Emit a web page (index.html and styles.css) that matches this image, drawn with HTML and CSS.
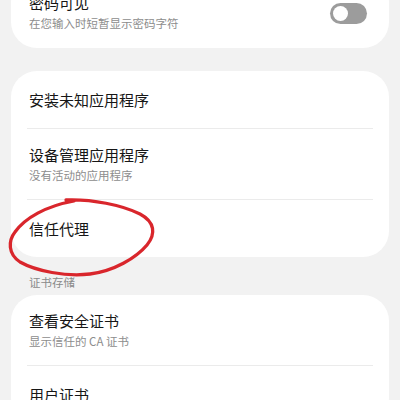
FILE: index.html
```html
<!DOCTYPE html>
<html lang="zh-CN">
<head>
<meta charset="utf-8">
<title>安全设置</title>
<link rel="stylesheet" href="styles.css">
</head>
<body>
<div class="screen">
  <section class="card card-first">
    <div class="row row-two row-switch">
      <div class="texts">
        <div class="title">密码可见</div>
        <div class="sub">在您输入时短暂显示密码字符</div>
      </div>
      <div class="toggle"><span class="knob"></span></div>
    </div>
  </section>

  <section class="card card-gap">
    <div class="row row-one"><div class="title">安装未知应用程序</div></div>
    <div class="sep"></div>
    <div class="row row-two">
      <div class="texts">
        <div class="title">设备管理应用程序</div>
        <div class="sub">没有活动的应用程序</div>
      </div>
    </div>
    <div class="sep"></div>
    <div class="row row-one"><div class="title">信任代理</div></div>
  </section>

  <div class="section-label">证书存储</div>

  <section class="card">
    <div class="row row-two">
      <div class="texts">
        <div class="title">查看安全证书</div>
        <div class="sub">显示信任的 CA 证书</div>
      </div>
    </div>
    <div class="sep"></div>
    <div class="row row-one"><div class="title">用户证书</div></div>
  </section>
</div>

<svg class="scribble" width="400" height="400" viewBox="0 0 400 400" aria-hidden="true">
  <path d="M66,200 C92,199 122,205 140,214 C155,222 156,234 147,245 C136,258 114,271 90,274 C66,277 36,271 20,262 C8,254 8,241 15,232 C25,218 46,206 74,201"/>
</svg>
</body>
</html>
```

FILE: styles.css
```css
html, body {
  margin: 0;
  padding: 0;
  background: #f2f2f2;
}

body {
  width: 400px;
  height: 400px;
  overflow: hidden;
  position: relative;
  font-family: "Noto Sans CJK SC", "Noto Sans", "Liberation Sans", sans-serif;
}

.screen {
  padding: 0 11px;
  display: flex;
  flex-direction: column;
}

.card {
  background: #ffffff;
  border-radius: 26px;
  display: flex;
  flex-direction: column;
}

.card-first {
  margin-top: -23px;
}

.card-gap {
  margin-top: 23px;
}

.row {
  box-sizing: border-box;
  padding: 0 22px 0 18px;
  display: flex;
  align-items: center;
}

.row-one {
  height: 57px;
}

.row-two {
  height: 70px;
  align-items: flex-start;
  padding-top: 16px;
}

.row-switch {
  height: 71px;
  justify-content: space-between;
}

.texts {
  display: flex;
  flex-direction: column;
  gap: 2px;
}

.title {
  font-size: 15px;
  line-height: 20px;
  color: #161616;
}

.sub {
  font-size: 11.5px;
  line-height: 16px;
  color: #8d8d8d;
}

.sep {
  height: 1px;
  background: #ebebeb;
  margin: 0 16px;
}

.section-label {
  box-sizing: border-box;
  height: 38px;
  padding: 18px 0 0 18px;
  font-size: 11.5px;
  line-height: 14px;
  color: #8a8a8a;
}

.toggle {
  margin-top: 10px;
  width: 37px;
  height: 21px;
  border-radius: 11px;
  background: #9c9c9c;
  display: flex;
  align-items: center;
  padding-left: 3px;
  box-sizing: border-box;
}

.knob {
  width: 15px;
  height: 15px;
  border-radius: 50%;
  background: #ffffff;
}

.scribble {
  position: absolute;
  left: 0;
  top: 0;
  pointer-events: none;
}

.scribble path {
  fill: none;
  stroke: #d9262c;
  stroke-width: 3.3;
  stroke-linecap: round;
  stroke-linejoin: round;
}
```
